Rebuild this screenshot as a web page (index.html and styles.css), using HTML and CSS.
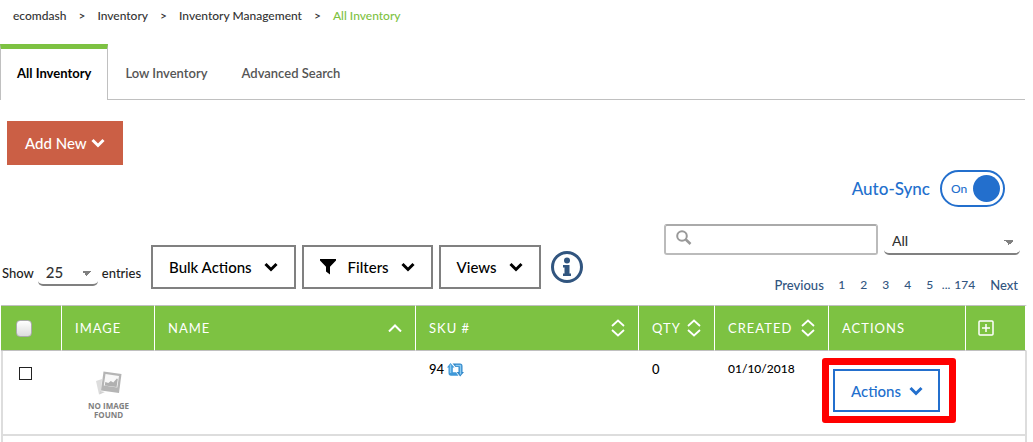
FILE: index.html
```html
<!DOCTYPE html>
<html lang="en">

<head>
 <meta charset="UTF-8">
 <meta name="viewport" content="width=device-width">
 <title>All Inventory</title>
 <link rel="stylesheet" href="styles.css">
</head>

<body>

 <!-- Shared icons -->
 <svg class="sprite" width="0" height="0" aria-hidden="true">
  <symbol id="chevron" viewBox="0 0 14 10">
   <path d="M1.5 2 7 7.5 12.5 2" fill="none" stroke="currentColor" stroke-width="3"/>
  </symbol>
  <symbol id="sort" viewBox="0 0 14 18">
   <path d="M1 7 7 1.5 13 7M1 11l6 5.5 6-5.5" fill="none" stroke="currentColor" stroke-width="1.8"/>
  </symbol>
 </svg>

 <nav class="breadcrumb" aria-label="Breadcrumb">
  <a href="#">ecomdash</a>
  <span>&gt;</span>
  <a href="#">Inventory</a>
  <span>&gt;</span>
  <a href="#">Inventory Management</a>
  <span>&gt;</span>
  <a class="current" href="#">All Inventory</a>
 </nav>

 <nav class="tabs">
  <a class="tab active" href="#">All Inventory</a>
  <a class="tab" href="#">Low Inventory</a>
  <a class="tab" href="#">Advanced Search</a>
 </nav>

 <button class="btn add-new" type="button">Add New <svg class="chevron"><use href="#chevron"/></svg></button>

 <div class="sync">
  <span>Auto-Sync</span>
  <button class="toggle" type="button" role="switch" aria-checked="true" aria-label="Auto-Sync On">On<span class="knob"></span></button>
 </div>

 <div class="toolbar">
  <div class="tools">
   <div class="length">
    <label for="entries">Show</label>
    <select class="select short" id="entries"><option>25</option></select>
    <span>entries</span>
   </div>
   <button class="btn" type="button">Bulk Actions <svg class="chevron"><use href="#chevron"/></svg></button>
   <button class="btn" type="button"><svg class="funnel" viewBox="0 0 16 16"><path d="M0 0h16v1.5L10 7.8V15.500L6 12.500V7.800L0 1.500z"/></svg>Filters <svg class="chevron"><use href="#chevron"/></svg></button>
   <button class="btn" type="button">Views <svg class="chevron"><use href="#chevron"/></svg></button>
   <a class="info" href="#" aria-label="Information">
    <svg viewBox="0 0 34 34">
     <circle cx="17" cy="17" r="14.500" fill="none" stroke="currentColor" stroke-width="3"/>
     <circle cx="17" cy="10.500" r="3" fill="currentColor"/>
     <path d="M13 15h6.500v8.500H21V26h-8v-2.500h1.500v-6H13z" fill="currentColor"/>
    </svg>
   </a>
  </div>

  <div class="finder">
   <div class="finder-row">
    <div class="search">
     <svg viewBox="0 0 16 16"><circle cx="6" cy="6" r="4.800"/><path d="m9.800 9.500 4.700 4.500" stroke-width="2.600"/></svg>
     <input type="search" aria-label="Search inventory">
    </div>
    <select class="select" aria-label="Search field"><option>All</option></select>
   </div>
   <nav class="pages" aria-label="Pages">
    <a class="step" href="#">Previous</a>
    <a href="#">1</a>
    <a href="#">2</a>
    <a href="#">3</a>
    <a href="#">4</a>
    <a href="#">5</a>
    <span class="dots">...</span>
    <a href="#">174</a>
    <a class="step next" href="#">Next</a>
   </nav>
  </div>
 </div>

 <table class="inventory">
  <colgroup>
   <col class="col-check">
   <col class="col-image">
   <col>
   <col class="col-sku">
   <col class="col-qty">
   <col class="col-created">
   <col class="col-actions">
   <col class="col-more">
  </colgroup>
  <thead>
   <tr>
    <th><input class="check-all" type="checkbox" aria-label="Select all"></th>
    <th>IMAGE</th>
    <th><div class="head">NAME <svg class="sort-up" viewBox="0 0 14 8"><path d="M1 7.500 7 1.500l6 6" fill="none" stroke="currentColor" stroke-width="2"/></svg></div></th>
    <th><div class="head">SKU # <svg class="sort"><use href="#sort"/></svg></div></th>
    <th><div class="head">QTY <svg class="sort"><use href="#sort"/></svg></div></th>
    <th><div class="head">CREATED <svg class="sort"><use href="#sort"/></svg></div></th>
    <th>ACTIONS</th>
    <th><button class="more" type="button" aria-label="Add column"><svg viewBox="0 0 16 16"><rect x="1" y="1" width="14" height="14" rx="1"/><path d="M8 4v8M4 8h8"/></svg></button></th>
   </tr>
  </thead>
  <tbody>
   <tr>
    <td class="check-cell"><input class="check" type="checkbox" aria-label="Select item 94"></td>
    <td class="image-cell">
     <div class="no-image">
      <svg viewBox="0 0 26 24">
       <path d="m0 10 6-2-1 14-2 1.500z" fill="#ddd"/>
       <path d="m4 20 5 1-5.500 2.500z" fill="#d2d2d2"/>
       <path d="m7.500.5 18 2.500-2.500 19L5 19.500z" fill="#b5b5b5"/>
       <path d="m9.500 3 13.500 2-1.700 11.500-13.500-2z" fill="#f8f8f8"/>
       <path d="m8.800 14.500.5-3.500 3 1 2.500-2 2.500 1.500 3.500-4 1 .5-1.200 8z" fill="#b0b0b0"/>
      </svg>
      NO IMAGE<br>FOUND
     </div>
    </td>
    <td></td>
    <td>
     94
     <svg class="resync" viewBox="0 0 17 14">
      <path d="M3.500 0 7.500 4.500H5.800v4.700H9l2.500 3.600H4Q1.500 12.800 1.500 10V4.500H0z" fill="#3f98d8"/>
      <path d="M13.200 13.500 9.500 9h2V4H8.500L5.500.5h7.500q2.500 0 2.500 2.800V9H17z" fill="#2f86c8"/>
      <path d="M3.500 1.500V10M13.500 11.500V2.500H8.500" fill="none" stroke="#8ccbf2" stroke-width="1.500"/>
     </svg>
    </td>
    <td>0</td>
    <td class="date">01/10/2018</td>
    <td class="action-cell"><div class="highlight"><button class="btn row-action" type="button">Actions <svg class="chevron"><use href="#chevron"/></svg></button></div></td>
    <td></td>
   </tr>
   <tr class="next-row"><td></td><td colspan="6"></td><td></td></tr>
  </tbody>
 </table>

</body>
</html>
```
FILE: styles.css
```css
* {
  box-sizing: border-box;
}
body {
  font-family: Lato, "Open Sans", sans-serif;
  font-size: 14px;
  font-weight: 500;
  line-height: 20px;
  color: #222;
  background-color: #fff;
  margin: 0 6px 0 0;
}
a {
  color: inherit;
  text-decoration: none;
}
button,
input,
select {
  font: inherit;
}
button {
  cursor: pointer;
}
svg {
  flex: none;
}
.sprite {
  position: absolute;
}

/* Navigation */
.breadcrumb {
  display: flex;
  gap: 12px;
  padding: 6px 13px 18px;
  font-size: 12px;
  color: #333;
}
.breadcrumb .current {
  color: #7dc242;
}
.tabs {
  display: flex;
  margin-right: 2px;
  background: linear-gradient(#c0c0c0, #c0c0c0) bottom / 100% 1px no-repeat;
}
.tab {
  padding: 19px 17px 17px;
  font-weight: 600;
  font-size: 13px;
  color: #555;
}
.tab.active {
  padding: 14px 16px 17px;
  border: 1px solid #c0c0c0;
  border-top: 5px solid #7dc242;
  border-bottom: 0;
  background-color: #fff;
  color: #000;
  font-weight: 700;
}

/* Buttons */
.btn {
  display: flex;
  align-items: center;
  height: 44px;
  padding: 0 16px;
  border: 2px solid #808080;
  background-color: #fff;
  color: #000;
  font-size: 15px;
}
.chevron {
  width: 14px;
  height: 10px;
  margin-left: 12px;
}
.add-new {
  margin: 21px 0 0 7px;
  border-color: #cb5f45;
  background-color: #cb5f45;
  color: #fff;
}
.add-new .chevron {
  margin-left: 4px;
}
.funnel {
  width: 16px;
  height: 16px;
  margin-right: 12px;
}

/* Auto-Sync switch */
.sync {
  display: flex;
  justify-content: flex-end;
  align-items: center;
  gap: 10px;
  margin: 5px 22px 17px 0;
  font-size: 17px;
  color: #236fcd;
}
.toggle {
  display: flex;
  align-items: center;
  justify-content: space-between;
  width: 65px;
  height: 37px;
  padding: 0 3px 0 9px;
  border: 2px solid #236fcd;
  border-radius: 19px;
  background-color: #fff;
  color: #236fcd;
  font-size: 12px;
}
.knob {
  width: 27px;
  height: 27px;
  border-radius: 50%;
  background-color: #236fcd;
}

/* Toolbar */
.toolbar {
  display: flex;
  justify-content: space-between;
  align-items: flex-end;
  padding-bottom: 10px;
}
.tools {
  display: flex;
  gap: 6px;
  padding-bottom: 6px;
}
.length {
  display: flex;
  align-items: center;
  gap: 4px;
  margin: 12px 4px 0 2px;
  font-size: 13px;
}
.select {
  appearance: none;
  width: 136px;
  height: 26px;
  padding: 0 8px;
  border: 0;
  border-bottom: 2px solid #808080;
  border-radius: 5px;
  background: linear-gradient(to bottom left, #808080 50%, transparent 50%) right 11px top 11px / 5px 5px no-repeat,
    linear-gradient(to bottom right, #808080 50%, transparent 50%) right 6px top 11px / 5px 5px no-repeat;
  color: #333;
}
.short {
  width: 60px;
  font-size: 15px;
}
.info {
  margin: 5px 3px;
  color: #31557f;
}
.info svg {
  display: block;
  width: 34px;
  height: 34px;
}
.finder-row {
  display: flex;
  align-items: flex-end;
  gap: 6px;
  margin-right: 7px;
}
.search {
  display: flex;
  align-items: center;
  width: 214px;
  height: 31px;
  padding: 0 10px;
  border: 2px solid #bbb;
  border-top-color: #aaa;
  border-radius: 3px;
}
.search svg {
  width: 16px;
  height: 16px;
  margin-bottom: 4px;
  fill: none;
  stroke: #999;
  stroke-width: 2;
}
.search input {
  flex: 1;
  min-width: 0;
  border: 0;
  outline: none;
  background: none;
}
.pages {
  display: flex;
  justify-content: flex-end;
  gap: 6px;
  margin-right: 9px;
  padding-top: 20px;
  font-size: 12px;
  color: #31557f;
}
.pages a {
  min-width: 16px;
  text-align: center;
}
.pages .dots {
  margin: 0 -2px;
}
.pages .step {
  margin-right: 4px;
  font-size: 13px;
}
.pages .next {
  margin: 0 0 0 9px;
}

/* Inventory table */
.inventory {
  width: calc(100% - 1px);
  margin-left: 1px;
  table-layout: fixed;
  border-collapse: separate;
  border-spacing: 0;
}
.col-check {
  width: 61px;
}
.col-image {
  width: 93px;
}
.col-sku {
  width: 223px;
}
.col-qty {
  width: 76px;
}
.col-created {
  width: 114px;
}
.col-actions {
  width: 137px;
}
.col-more {
  width: 61px;
}
th {
  height: 46px;
  padding: 0 13px;
  border: solid #c0c0c0;
  border-width: 1px 0;
  border-right: 1px solid #fff;
  background-color: #7dc242;
  color: #fff;
  font-size: 13px;
  font-weight: 400;
  letter-spacing: 1px;
  text-align: left;
}
th:last-child {
  padding: 0 12px;
  border-right-width: 2px;
}
.head {
  display: flex;
  align-items: center;
  justify-content: space-between;
}
.sort {
  width: 14px;
  height: 18px;
}
.sort-up {
  width: 14px;
  height: 8px;
}
.check-all {
  appearance: none;
  display: block;
  width: 16px;
  height: 17px;
  margin: 0 2px;
  border: 1px solid #aaa;
  border-radius: 4px;
  background: linear-gradient(#fff, #ddd);
}
.more {
  display: block;
  padding: 0;
  border: 0;
  background: none;
  color: #fff;
}
.more svg {
  display: block;
  width: 16px;
  height: 16px;
  fill: none;
  stroke: currentColor;
  stroke-width: 1.5;
}
td {
  height: 85px;
  padding: 8px 13px 0;
  border-bottom: 2px solid #ddd;
  color: #000;
  font-size: 13px;
  vertical-align: top;
}
td:first-child {
  border-left: 2px solid #ddd;
}
td:last-child {
  border-right: 2px solid #ddd;
}
.date {
  font-size: 12px;
}
.check-cell {
  padding: 16px;
}
.check {
  appearance: none;
  display: block;
  width: 13px;
  height: 13px;
  margin: 0;
  border: 1px solid #222;
}
.image-cell {
  padding: 20px 0 0;
}
.no-image {
  color: #808080;
  font-family: "Open Sans", sans-serif;
  font-size: 8px;
  font-weight: 700;
  line-height: 9px;
  text-align: center;
}
.no-image svg {
  display: block;
  width: 26px;
  height: 24px;
  margin: 0 auto 6px;
}
.resync {
  width: 17px;
  height: 14px;
  vertical-align: -3px;
}
.action-cell {
  padding: 18px 4px 0;
}
.highlight {
  position: relative;
  width: 107px;
}
.highlight::after {
  content: "";
  position: absolute;
  inset: -11px -16px -11px -11px;
  border: 7px solid #f00;
  border-radius: 3px;
  pointer-events: none;
}
.row-action {
  width: 100%;
  height: 43px;
  border-color: #236fcd;
  color: #236fcd;
}
.row-action .chevron {
  margin-left: 8px;
}
.next-row td {
  height: 6px;
  padding: 0;
  border-bottom: 0;
}
```
